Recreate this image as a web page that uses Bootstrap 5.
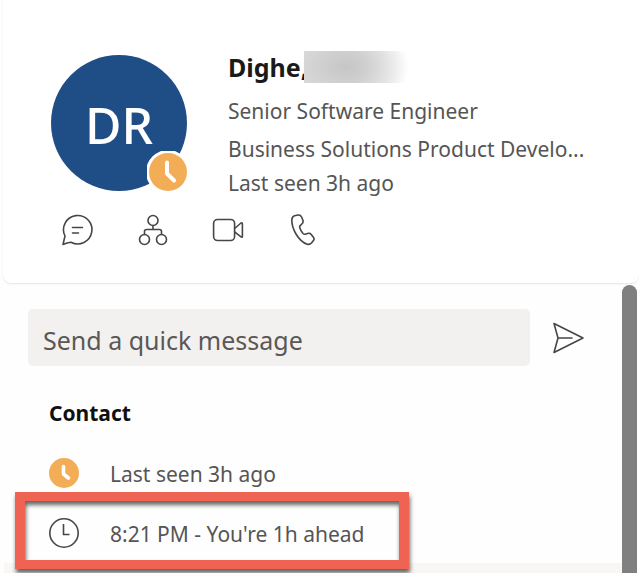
<!DOCTYPE html>
<html lang="en">
<head>
<meta charset="utf-8">
<meta name="viewport" content="width=device-width, initial-scale=1">
<title>Contact card</title>
<link href="https://cdn.jsdelivr.net/npm/bootstrap@5.3.0/dist/css/bootstrap.min.css" rel="stylesheet">
<style>
body { font-family: "Noto Sans", "Open Sans", sans-serif; font-size: 21px; line-height: 36px; color: #555; background: #fefefe; }
.profile { padding: 45px 32px 37px 48px; margin-left: 3px; background: #fff; border-radius: 0 0 8px 8px; box-shadow: 0 1px 2px rgba(0,0,0,.1); z-index: 1; }
.profile-main { gap: 41px; }
.avatar { width: 136px; height: 136px; margin-top: 10px; background: #1f4e87; color: #fff; font-size: 50px; font-weight: 500; padding-top: 4px; }
.presence { right: -4px; bottom: -4px; width: 44px; height: 44px; }
.person { font-size: 25px; line-height: 44px; font-weight: 700; color: #1b1a19; }
.redacted { width: 104px; height: 32px; margin-left: -4px; background: radial-gradient(ellipse 62px 40px at 42px 50%, #c6c6c6, #c6c6c600), linear-gradient(90deg, #dedede 50%, #fff); z-index: 1; }
.role { line-height: 44px; }
.dept { line-height: 32px; }
.actions { gap: 43px; margin: 13px 0 0 11px; }
.icon { width: 32px; height: 32px; display: block; flex-shrink: 0; fill: none; stroke: #484644; stroke-width: 1.6; stroke-linejoin: round; stroke-linecap: round; }
.plain { border: 0; background: none; padding: 0; }
.details { padding: 26px 0 0; }
.compose { padding: 0 37px 0 28px; gap: 23px; }
.compose .form-control { height: 57px; background: #f2f1f0; border: 0; border-radius: 5px; color: #555; font-size: 25px; padding: 5px 15px 0; }
.compose .form-control::placeholder { color: #5a5856; opacity: 1; }
.info { padding: 29px 49px 0; }
.info h2 { font-size: 21px; line-height: 36px; font-weight: 700; color: #11100f; margin: 0 0 23px; }
.info-row { gap: 29px; height: 40px; }
.info-row + .info-row { margin-top: 20px; }
.marker { left: -34px; top: -22px; width: 394px; height: 77px; border: solid #ee6352; border-width: 9px 10px; filter: drop-shadow(1px 4px 2px rgba(0,0,0,.6)); }
.next-section { margin: 9px 0 0 4px; background: #f8f7f6; }
.track { width: 17px; padding: 2px 2px 0 0; }
.thumb { background: #808080; border-radius: 8px 8px 0 0; }
</style>
</head>
<body>
<main class="d-flex flex-column vh-100 overflow-hidden">
  <header class="profile position-relative">
    <div class="profile-main d-flex">
      <div class="avatar rounded-circle position-relative flex-shrink-0 d-flex align-items-center justify-content-center">DR
        <svg class="presence position-absolute" viewBox="0 0 44 44" role="img" aria-label="Away"><circle cx="21" cy="21" r="22" fill="#fff"/><circle cx="21" cy="21" r="19" fill="#f3ad56"/><path d="M20 11.500v11l7 7" fill="none" stroke="#fff" stroke-width="4" stroke-linecap="round" stroke-linejoin="round"/></svg>
      </div>
      <div class="flex-grow-1">
        <h1 class="person m-0 d-flex align-items-center">Dighe,<span class="redacted"></span></h1>
        <div class="role">Senior Software Engineer</div>
        <div class="dept">Business Solutions Product Develo...</div>
        <div>Last seen 3h ago</div>
      </div>
    </div>
    <nav class="actions d-flex" aria-label="Contact actions">
      <button class="plain" type="button" aria-label="Chat"><svg class="icon" viewBox="0 0 32 32"><path d="M1 30.500 3 22A14.200 14.200 0 1 1 9 28.200Q5 28.500 1 30.500ZM10.500 13.500h10M10.500 19h6"/></svg></button>
      <button class="plain" type="button" aria-label="Organization"><svg class="icon" viewBox="0 0 32 32"><circle cx="16" cy="6.500" r="5"/><circle cx="7.500" cy="25.500" r="5"/><circle cx="24.500" cy="25.500" r="5"/><path d="M16 11.500v4M7.500 20.500v-3q0-2 2-2h13q2 0 2 2v3"/></svg></button>
      <button class="plain" type="button" aria-label="Video call"><svg class="icon" viewBox="0 0 32 32"><rect x="1.600" y="5.500" width="21" height="21" rx="4"/><path d="M22.600 14.500 29 9q1.400-.7 1.400.8v12.600q0 1.200-1.400.5L22.600 17.800"/></svg></button>
      <button class="plain" type="button" aria-label="Call"><svg class="icon" viewBox="0 0 32 32"><path d="M7.500 1.800 11 1Q13.500.7 14.600 3L16 6.500Q16.500 8.600 14.800 10L13.200 11.600Q12.400 12.400 12.800 13.700Q13.800 17 16 19.500Q17 20.500 18.200 20.200L21.500 19.300Q23 19 24.200 20.400L26.400 23.200Q27.800 25 26.400 26.600L24.500 29Q22.800 30.800 20.300 30.200Q14 28.400 9 20Q4.700 12.800 4.800 6Q5 2.500 7.500 1.800Z"/></svg></button>
    </nav>
  </header>
  <div class="d-flex flex-grow-1 overflow-hidden">
    <section class="details flex-grow-1 d-flex flex-column">
      <form class="compose d-flex align-items-center">
        <input class="form-control" type="text" placeholder="Send a quick message" aria-label="Send a quick message">
        <button class="plain" type="button" aria-label="Send"><svg class="icon" viewBox="0 0 32 32"><path d="M1 1.500 30 16 1 30.500 5 16ZM5 16h14"/></svg></button>
      </form>
      <div class="info">
        <h2>Contact</h2>
        <div class="info-row d-flex align-items-center">
          <svg class="icon" viewBox="0 0 32 32" aria-hidden="true"><circle cx="15" cy="15" r="15" fill="#f3ad56" stroke="none"/><path d="M14.500 8.500v7.500l5 4" stroke="#fff" stroke-width="3.600"/></svg>
          <span>Last seen 3h ago</span>
        </div>
        <div class="info-row d-flex align-items-center position-relative">
          <svg class="icon" viewBox="0 0 32 32" aria-hidden="true"><circle cx="15" cy="15" r="14.200"/><path d="M14.500 6v10.500h6" stroke-linecap="butt" stroke-linejoin="miter"/></svg>
          <span>8:21 PM - You're 1h ahead</span>
          <div class="marker position-absolute"></div>
        </div>
      </div>
      <div class="next-section flex-grow-1"></div>
    </section>
    <div class="track d-flex flex-shrink-0"><div class="thumb flex-grow-1"></div></div>
  </div>
</main>
<script src="https://cdn.jsdelivr.net/npm/bootstrap@5.3.0/dist/js/bootstrap.bundle.min.js"></script>
</body>
</html>
